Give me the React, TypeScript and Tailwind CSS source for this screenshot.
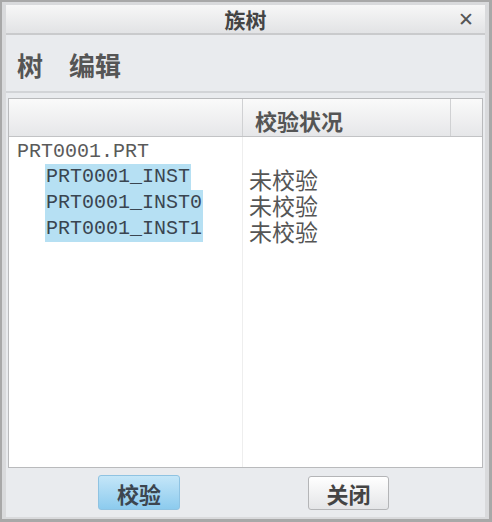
import React from "react";

const cjk = "font-['Noto_Sans_CJK_SC',sans-serif]";
const mono = "font-['Liberation_Mono',monospace]";

const rows = [
  { name: "PRT0001_INST", status: "未校验" },
  { name: "PRT0001_INST0", status: "未校验" },
  { name: "PRT0001_INST1", status: "未校验" },
];

export default function App() {
  return (
    <div className="w-[492px] h-[522px] bg-[#a8a8a8] pl-[2px] pr-[3px] pt-[2px] pb-[3px]">
      <div className="h-full bg-[#d9dadc] pl-[4px] pr-[4px] pt-[3px] pb-[2px] flex flex-col">
        <div className="flex-1 flex flex-col bg-[#e9ebee]">
          {/* Title bar */}
          <div className="relative h-[30px] flex items-center justify-center bg-gradient-to-b from-[#f7f7f7] to-[#e2e3e5] border-b-2 border-[#c9cacc]">
            <span className={`${cjk} text-[21px] font-bold text-[#444] leading-none`}>族树</span>
            <span className="absolute right-[11px] top-[5px] font-['DejaVu_Sans',sans-serif] text-[19px] font-bold text-[#555] leading-none">
              ✕
            </span>
          </div>

          {/* Menu bar */}
          <div className="h-[58px] flex items-center gap-[26px] pl-[11px] pt-[4px] border-b-2 border-[#d2d4d7]">
            <span className={`${cjk} text-[26px] font-bold text-[#555] leading-none`}>树</span>
            <span className={`${cjk} text-[26px] font-bold text-[#555] leading-none`}>编辑</span>
          </div>

          {/* Table */}
          <div className="mx-[2px] mt-[5px] h-[370px] bg-white border border-[#b9babc] flex flex-col">
            <div className="h-[38px] flex bg-gradient-to-b from-[#fafafa] to-[#e6e7e9] border-b border-[#c2c3c5]">
              <div className="w-[234px] border-r border-[#d0d1d3]" />
              <div className="w-[208px] border-r border-[#d0d1d3] flex items-center pl-[12px] pt-[5px]">
                <span className={`${cjk} text-[22px] font-bold text-[#555] leading-none`}>校验状况</span>
              </div>
              <div className="flex-1" />
            </div>
            <div className="flex-1 flex">
              <div className="w-[234px] border-r border-[#eeeeee] pt-[2px]">
                <div className={`${mono} h-[25px] flex items-center pl-[8px] text-[20px] text-[#5a5a5a] leading-none`}>
                  PRT0001.PRT
                </div>
                {rows.map((r) => (
                  <div key={r.name} className="h-[26px] flex items-center pl-[36px]">
                    <span className={`${mono} h-full flex items-center bg-[#b6e0f3] pl-[1px] pr-[1px] text-[20px] text-[#3a4550] leading-none`}>
                      {r.name}
                    </span>
                  </div>
                ))}
              </div>
              <div className="flex-1 pt-[29px]">
                {rows.map((r) => (
                  <div key={r.name} className="h-[26px] flex items-center pl-[6px]">
                    <span className={`${cjk} text-[23px] text-[#555] leading-none`}>{r.status}</span>
                  </div>
                ))}
              </div>
            </div>
          </div>

          {/* Footer */}
          <div className="flex-1 flex items-center">
            <div className="ml-[92px] w-[82px] h-[35px] rounded-[3px] border border-[#8fc3e2] bg-gradient-to-b from-[#c4e6f8] to-[#8ccbee] flex items-center justify-center">
              <span className={`${cjk} text-[22px] font-bold text-[#3c4650] leading-none`}>校验</span>
            </div>
            <div className="ml-[128px] w-[81px] h-[34px] rounded-[3px] border border-[#b4b5b7] bg-gradient-to-b from-[#ffffff] to-[#e4e5e7] flex items-center justify-center">
              <span className={`${cjk} text-[22px] font-bold text-[#444] leading-none`}>关闭</span>
            </div>
          </div>
        </div>
      </div>
    </div>
  );
}
